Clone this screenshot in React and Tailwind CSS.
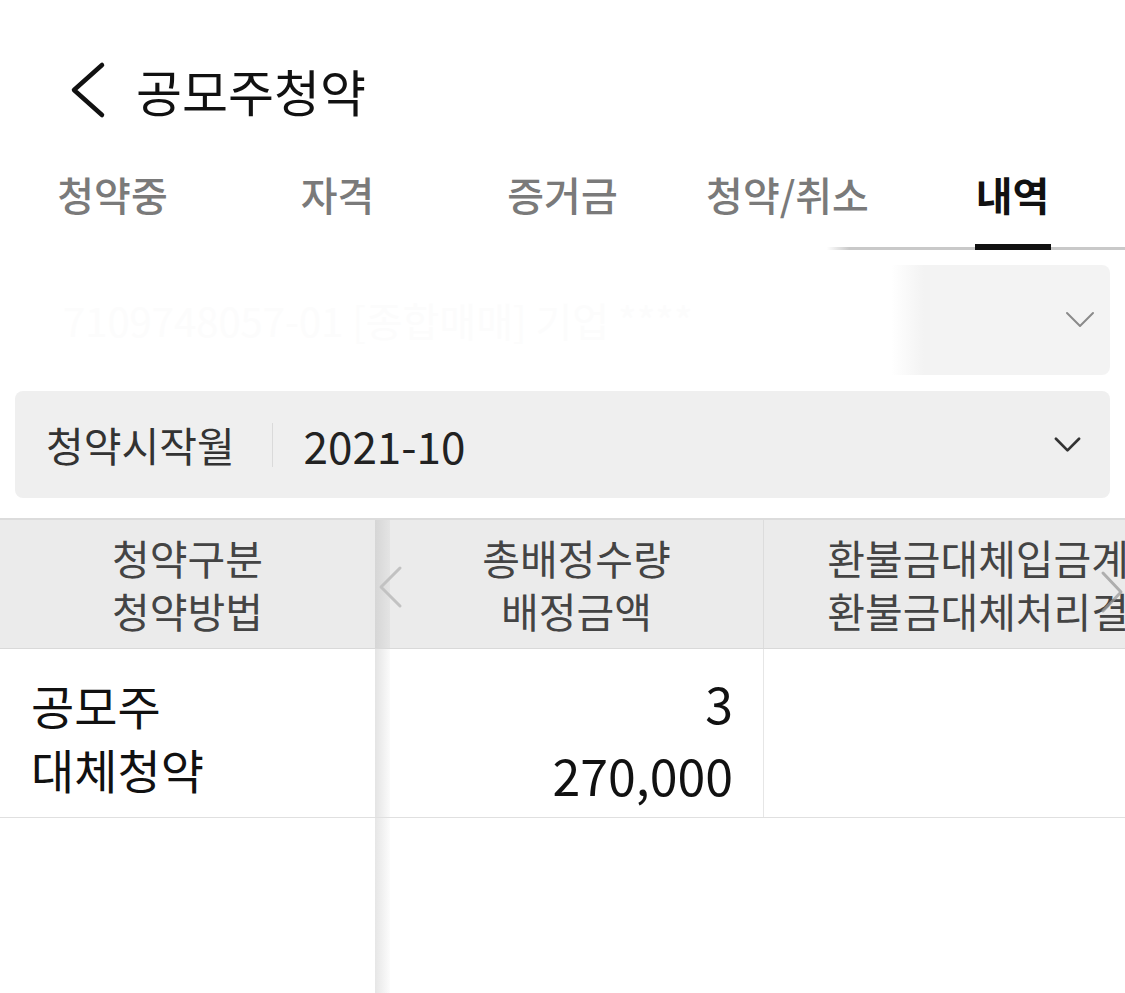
import React from 'react';

const TABS=['청약중','자격','증거금','청약/취소','내역'];

function Chevron({className,stroke,width}){
  return (
    <svg className={className} viewBox="0 0 30 18" fill="none">
      <path d="M2 2 L15 15 L28 2" stroke={stroke} strokeWidth={width} strokeLinecap="round" strokeLinejoin="round"/>
    </svg>
  );
}

export default function App(){
  return (
    <div className="h-[993px] w-full overflow-hidden bg-white font-['Noto_Sans_CJK_KR',sans-serif]">

      {/* ── Title bar ─────────────────────────────────────────── */}
      <div className="flex h-[140px] items-center gap-[30px] pl-[68px] pt-[40px]">
        <svg className="h-[58px] w-[38px]" viewBox="0 0 38 58" fill="none">
          <path d="M34 4 L6 29 L34 54" stroke="#111" strokeWidth="4.5" strokeLinecap="round" strokeLinejoin="round"/>
        </svg>
        <span className="text-[50px] leading-none text-[#111]">공모주청약</span>
      </div>

      {/* ── Tabs ─────────────────────────────────────────────── */}
      <div className="grid h-[110px] grid-cols-5 bg-[linear-gradient(to_right,rgba(201,201,201,0)_73.5%,#c9c9c9_75.5%)] bg-[length:100%_3px] bg-bottom bg-no-repeat">
        {TABS.map((t,i)=>{
          const active=i===4;
          return (
            <div key={t} className="flex flex-col items-center">
              <span className={active?'pt-[29px] text-[40px] font-bold leading-[50px] text-[#111]':'pt-[29px] text-[40px] font-medium leading-[50px] text-[#7a7a7a]'}>{t}</span>
              {active&&<div className="mt-auto h-[6px] w-[76px] bg-[#111]"/>}
            </div>
          );
        })}
      </div>

      {/* ── Account selector (masked) ─────────────────────────── */}
      <div className="mx-[15px] mt-[15px] flex h-[110px] items-center rounded-[8px] bg-[linear-gradient(to_right,#ffffff_80%,#f3f3f3_83%)] pl-[48px] pr-[15px]">
        <span className="flex-1 truncate text-[40px] text-[#fcfcfc]">7109748057-01 [종합매매] 기업 ****</span>
        <Chevron className="h-[18px] w-[30px]" stroke="#8a8a8a" width={2}/>
      </div>

      {/* ── Month selector ───────────────────────────────────── */}
      <div className="mx-[15px] mt-[16px] flex h-[107px] items-center rounded-[8px] bg-[#efefef] pl-[31px] pr-[29px]">
        <span className="text-[41px] leading-none text-[#333]">청약시작월</span>
        <div className="ml-[37px] h-[44px] w-px bg-[#dadada]"/>
        <span className="ml-[31px] flex-1 text-[44px] leading-none text-[#222]">2021-10</span>
        <Chevron className="h-[16px] w-[27px]" stroke="#333" width={3}/>
      </div>

      {/* ── Result table ─────────────────────────────────────── */}
      <div className="relative mt-[20px] flex h-[475px] flex-col overflow-hidden border-t-2 border-[#dcdcdc]">

        {/* header */}
        <div className="flex h-[129px] shrink-0 border-b border-[#d9d9d9] bg-[#ebebeb] text-[41px] leading-[53px] text-[#444]">
          <div className="flex w-[375px] shrink-0 flex-col items-center justify-center">
            <span>청약구분</span>
            <span>청약방법</span>
          </div>
          <div className="w-[15px] shrink-0 bg-linear-to-r from-[#d6d6d6] to-[#e4e4e4]"/>
          <div className="flex w-[374px] shrink-0 flex-col items-center justify-center border-r border-[#dcdcdc]">
            <span>총배정수량</span>
            <span>배정금액</span>
          </div>
          <div className="flex w-[466px] shrink-0 flex-col items-center justify-center whitespace-nowrap">
            <span>환불금대체입금계좌</span>
            <span>환불금대체처리결과</span>
          </div>
        </div>

        {/* row */}
        <div className="flex h-[169px] shrink-0 border-b border-[#e0e0e0] text-[#111]">
          <div className="flex w-[375px] shrink-0 flex-col justify-center pl-[31px] pt-[8px] text-[47px] leading-[64px]">
            <span>공모주</span>
            <span>대체청약</span>
          </div>
          <div className="w-[15px] shrink-0 bg-linear-to-r from-[#e4e4e4] to-[#fbfbfb]"/>
          <div className="flex w-[374px] shrink-0 flex-col items-end justify-center border-r border-[#e6e6e6] pr-[30px] pt-[10px] text-[50px] leading-[72px]">
            <span>3</span>
            <span>270,000</span>
          </div>
          <div className="w-[466px] shrink-0"/>
        </div>

        {/* filler */}
        <div className="flex flex-1">
          <div className="w-[375px] shrink-0"/>
          <div className="w-[15px] shrink-0 bg-linear-to-r from-[#e6e6e6] to-[#fcfcfc]"/>
        </div>

        {/* scroll hints */}
        <svg className="absolute left-[376px] top-[45px] h-[44px] w-[28px]" viewBox="0 0 28 44" fill="none">
          <path d="M24 3 L5 22 L24 41" stroke="#c2c2c2" strokeWidth="3" strokeLinecap="round" strokeLinejoin="round"/>
        </svg>
        <svg className="absolute right-0 top-[50px] h-[44px] w-[26px]" viewBox="0 0 26 44" fill="none">
          <path d="M4 3 L22 22 L4 41" stroke="#9a9a9a" strokeOpacity="0.75" strokeWidth="3" strokeLinecap="round" strokeLinejoin="round"/>
        </svg>
      </div>

    </div>
  );
}
